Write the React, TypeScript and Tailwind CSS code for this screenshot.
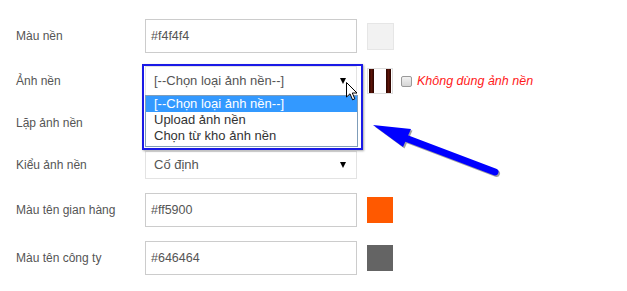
import React from "react";

const Arrow = () => (
  <span className="absolute right-[10px] top-1/2 -translate-y-1/2 w-0 h-0 border-l-[3.5px] border-r-[3.5px] border-t-[6px] border-l-transparent border-r-transparent border-t-black" />
);

function Label({ children }: { children: React.ReactNode }) {
  return <div className="w-[145px] pl-4 text-[12px] text-[#555]">{children}</div>;
}

function TextInput({ value }: { value: string }) {
  return (
    <div className="w-[212px] h-full border border-[#cccccc] bg-white flex items-center pl-[5px] text-[12.5px] text-[#555]">
      {value}
    </div>
  );
}

function SelectBox({ value }: { value: string }) {
  return (
    <div className="relative w-[212px] h-full border border-[#e3e3e3] bg-white flex items-center pl-[8px] text-[13px] text-[#555]">
      {value}
      <Arrow />
    </div>
  );
}

export default function App() {
  return (
    <div
      className="relative w-[627px] h-[291px] bg-white overflow-hidden"
      style={{ fontFamily: '"Liberation Sans", Arial, sans-serif' }}
    >
      <div className="flex flex-col pt-[19px]">
        {/* Row 1 */}
        <div className="flex items-center h-[34px]">
          <Label>Màu nền</Label>
          <TextInput value="#f4f4f4" />
          <div className="ml-[10px] w-[27px] h-[27px] bg-[#f2f2f2] border border-[#e6e6e6]" />
        </div>

        {/* Row 2 */}
        <div className="flex items-center h-[30px] mt-[13px]">
          <Label>Ảnh nền</Label>
          <SelectBox value="[--Chọn loại ảnh nền--]" />
          <div className="ml-[10px] w-[26px] h-[26px] border border-[#dddddd] bg-white flex justify-between px-px py-0">
            <div className="w-[5px] h-full bg-gradient-to-r from-[#2a0500] via-[#5a1408] to-[#2a0500]" />
            <div className="w-[5px] h-full bg-gradient-to-r from-[#2a0500] via-[#5a1408] to-[#2a0500]" />
          </div>
          <div className="ml-[8px] w-[11px] h-[11px] rounded-[2px] border border-[#9a9a9a] bg-gradient-to-b from-[#f2f2f2] to-[#d6d6d6]" />
          <span className="ml-[5px] text-[12.5px] italic text-[#ff1a1a]">Không dùng ảnh nền</span>
        </div>

        {/* Row 3 */}
        <div className="flex items-center h-[29px] mt-[12px]">
          <Label>Lặp ảnh nền</Label>
          <SelectBox value="" />
        </div>

        {/* Row 4 */}
        <div className="flex items-center h-[28px] mt-[14px]">
          <Label>Kiểu ảnh nền</Label>
          <SelectBox value="Cố định" />
        </div>

        {/* Row 5 */}
        <div className="flex items-center h-[34px] mt-[14px]">
          <Label>Màu tên gian hàng</Label>
          <TextInput value="#ff5900" />
          <div className="ml-[10px] w-[26px] h-[26px] bg-[#ff5900]" />
        </div>

        {/* Row 6 */}
        <div className="flex items-center h-[34px] mt-[14px]">
          <Label>Màu tên công ty</Label>
          <TextInput value="#646464" />
          <div className="ml-[10px] w-[26px] h-[26px] bg-[#646464]" />
        </div>
      </div>

      {/* Opened dropdown list */}
      <div className="absolute left-[145px] top-[95px] w-[213px] h-[52px] bg-white border border-[#7f9db9] text-[13px] text-[#333] leading-[16px]">
        <div className="h-[16px] bg-[#3399ff] text-white pl-[8px]">[--Chọn loại ảnh nền--]</div>
        <div className="h-[16px] pl-[8px]">Upload ảnh nền</div>
        <div className="h-[16px] pl-[8px]">Chọn từ kho ảnh nền</div>
      </div>

      {/* Annotation rectangle */}
      <div className="absolute left-[142px] top-[64px] w-[221px] h-[86px] border-2 border-[#1a1ae6] shadow-[1px_1px_2px_rgba(0,0,0,0.35)]" />

      {/* Mouse cursor */}
      <svg className="absolute left-[346px] top-[82px]" width="14" height="20" viewBox="0 0 14 20">
        <path
          d="M0.5 0.5 L0.5 15 L4 11.8 L6.6 17.8 L8.8 16.8 L6.3 11 L11 11 Z"
          fill="white"
          stroke="black"
          strokeWidth="1"
          strokeLinejoin="round"
        />
      </svg>

      {/* Blue arrow annotation */}
      <svg className="absolute left-[365px] top-[117px]" width="145" height="65" viewBox="365 117 145 65">
        <g transform="translate(1.5,1.5)" opacity="0.45">
          <line x1="400" y1="136" x2="495" y2="172" stroke="#333" strokeWidth="7" strokeLinecap="round" />
          <polygon points="373,125 411,129 403,147" fill="#333" />
        </g>
        <line x1="400" y1="136" x2="495" y2="172" stroke="#0000ff" strokeWidth="7" strokeLinecap="round" />
        <polygon points="373,125 411,129 403,147" fill="#0000ff" />
      </svg>
    </div>
  );
}
